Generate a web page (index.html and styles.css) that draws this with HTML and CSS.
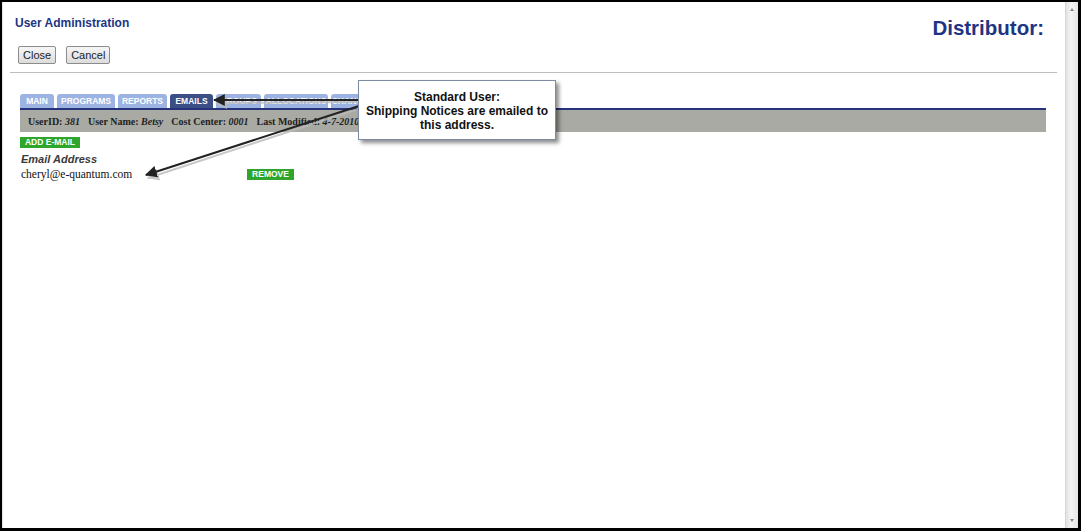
FILE: index.html
```html
<!DOCTYPE html>
<html lang="en">
<head>
  <meta charset="UTF-8" />
  <title>User Administration</title>
  <link rel="stylesheet" href="styles.css">
</head>
<body>
  <div class="frame">
    <div class="page">
      <div class="top">
        <h1 class="title">User Administration</h1>
        <div class="brand">Distributor:</div>
      </div>

      <div class="actions">
        <button class="btn">Close</button>
        <button class="btn">Cancel</button>
      </div>

      <hr class="rule" />

      <div class="panel">
        <ul class="tabs">
          <li class="tab w-main">MAIN</li>
          <li class="tab w-programs">PROGRAMS</li>
          <li class="tab w-reports">REPORTS</li>
          <li class="tab active w-emails">EMAILS</li>
          <li class="tab w-groups">GROUPS</li>
          <li class="tab w-alloc">ALLOCATIONS</li>
          <li class="tab w-change">CHANGES</li>
        </ul>
        <div class="infobar">
          <span class="info">UserID: <i>381</i></span>
          <span class="info">User Name: <i>Betsy</i></span>
          <span class="info">Cost Center: <i>0001</i></span>
          <span class="info">Last Modified: <i>4-7-2010 by admin</i></span>
        </div>

        <button class="green add">ADD E-MAIL</button>
        <div class="label">Email Address</div>
        <div class="email-row">
          <span class="email">cheryl@e-quantum.com</span>
          <button class="green">REMOVE</button>
        </div>
      </div>
    </div>

    <div class="scrollbar">
      <span class="arrow up"></span>
      <span class="arrow down"></span>
    </div>

    <!-- callout pointing at the tab and the address -->
    <svg class="pointers" width="1081" height="531" viewBox="0 0 1081 531">
      <defs>
        <marker id="head" viewBox="0 0 10 10" refX="9" refY="5" markerWidth="6" markerHeight="6" orient="auto">
          <path d="M0 0 L10 5 L0 10 Z" fill="#222" />
        </marker>
        <marker id="headShadow" viewBox="0 0 10 10" refX="9" refY="5" markerWidth="6" markerHeight="6" orient="auto">
          <path d="M0 0 L10 5 L0 10 Z" fill="#bbb" />
        </marker>
      </defs>
      <g stroke="#bbb" stroke-width="2" fill="none" opacity="0.8">
        <line x1="361" y1="102" x2="216" y2="103" marker-end="url(#headShadow)" />
        <line x1="361" y1="108" x2="148" y2="178" marker-end="url(#headShadow)" />
      </g>
      <g stroke="#222" stroke-width="2" fill="none">
        <line x1="359" y1="100" x2="214" y2="100" marker-end="url(#head)" />
        <line x1="359" y1="106" x2="146" y2="175" marker-end="url(#head)" />
      </g>
    </svg>

    <div class="callout">
      Standard User:<br>
      Shipping Notices are emailed to<br>
      this address.
    </div>
  </div>
</body>
</html>
```

FILE: styles.css
```css
html, body {
  margin: 0;
  padding: 0;
  background: #fff;
}
.frame {
  position: relative;
  display: flex;
  width: 1081px;
  height: 531px;
  box-sizing: border-box;
  border: 2px solid #000;
  border-right-width: 3px;
  border-bottom-width: 3px;
  font-family: "Liberation Sans", Arial, sans-serif;
  overflow: hidden;
}
.page {
  flex: 1;
  border-left: 1px solid #e4e4e4;
}

.top {
  display: flex;
  justify-content: space-between;
  align-items: flex-start;
  padding: 13px 21px 0 12px;
}
.title {
  margin: 0;
  font-size: 12px;
  line-height: 16px;
  font-weight: bold;
  color: #1d3584;
}
.brand {
  margin-top: 1px;
  font-size: 20.5px;
  line-height: 24px;
  font-weight: bold;
  color: #1d3584;
}

.actions {
  display: flex;
  gap: 10px;
  padding: 6px 0 0 15px;
}
.btn {
  height: 18px;
  padding: 0 4px;
  font-family: "Liberation Sans", Arial, sans-serif;
  font-size: 11px;
  color: #222;
  background: linear-gradient(#f6f6f6, #dcdcdc);
  border: 1px solid #8c8c8c;
  border-radius: 2px;
}

.rule {
  margin: 8px 8px 0 7px;
  border: 0;
  border-top: 1px solid #bdbdbd;
}

.panel {
  margin: 21px 19px 0 17px;
}
.tabs {
  display: flex;
  gap: 3px;
  margin: 0;
  padding: 0;
  list-style: none;
}
.tab {
  height: 14px;
  line-height: 15px;
  text-align: center;
  font-size: 8.5px;
  font-weight: bold;
  color: #fff;
  background: #9db4e2;
  border-radius: 3px 3px 0 0;
}
.tab.active {
  background: #3b4e86;
}
.w-main { width: 34px; }
.w-programs { width: 58px; }
.w-reports { width: 49px; }
.w-emails { width: 43px; }
.w-groups { width: 45px; }
.w-alloc { width: 64px; }
.w-change { width: 44px; }

.infobar {
  display: flex;
  gap: 8px;
  height: 22px;
  align-items: center;
  padding-left: 8px;
  border-top: 2px solid #27337a;
  background: #a9aaa3;
  font-family: "Liberation Serif", "Times New Roman", serif;
  font-size: 10px;
  font-weight: bold;
  color: #1e1e1e;
  white-space: nowrap;
}

.green {
  display: block;
  height: 11px;
  padding: 0 2px;
  border: 0;
  background: #2ea62e;
  color: #fff;
  font-family: "Liberation Sans", Arial, sans-serif;
  font-size: 8.5px;
  font-weight: bold;
  line-height: 11px;
  white-space: nowrap;
}
.add {
  width: 60px;
  margin-top: 5px;
}
.label {
  margin: 5px 0 0 1px;
  font-size: 11px;
  line-height: 12px;
  font-weight: bold;
  font-style: italic;
  color: #3a3a3a;
}
.email-row {
  display: flex;
  align-items: center;
  margin-top: 3px;
}
.email {
  width: 226px;
  padding-left: 1px;
  font-family: "Liberation Serif", "Times New Roman", serif;
  font-size: 11.5px;
  color: #111;
}
.email-row .green {
  width: 47px;
}

.scrollbar {
  position: relative;
  width: 12px;
  background: linear-gradient(90deg, #e2e2e2, #f4f4f4 40%, #e6e6e6);
  border-left: 1px solid #d6d6d6;
}
.arrow {
  position: absolute;
  left: 4px;
  width: 0;
  height: 0;
  border-left: 2px solid transparent;
  border-right: 2px solid transparent;
}
.arrow.up {
  top: 6px;
  border-bottom: 3px solid #888;
}
.arrow.down {
  bottom: 6px;
  border-top: 3px solid #888;
}

.pointers {
  position: absolute;
  left: -2px;
  top: -2px;
  pointer-events: none;
}
.callout {
  position: absolute;
  left: 356px;
  top: 78px;
  width: 198px;
  height: 60px;
  padding-top: 9px;
  box-sizing: border-box;
  background: #fff;
  border: 1px solid #7d8ba0;
  box-shadow: 3px 3px 4px rgba(0, 0, 0, 0.45);
  text-align: center;
  font-size: 12px;
  line-height: 14px;
  font-weight: bold;
  color: #111;
}
```
